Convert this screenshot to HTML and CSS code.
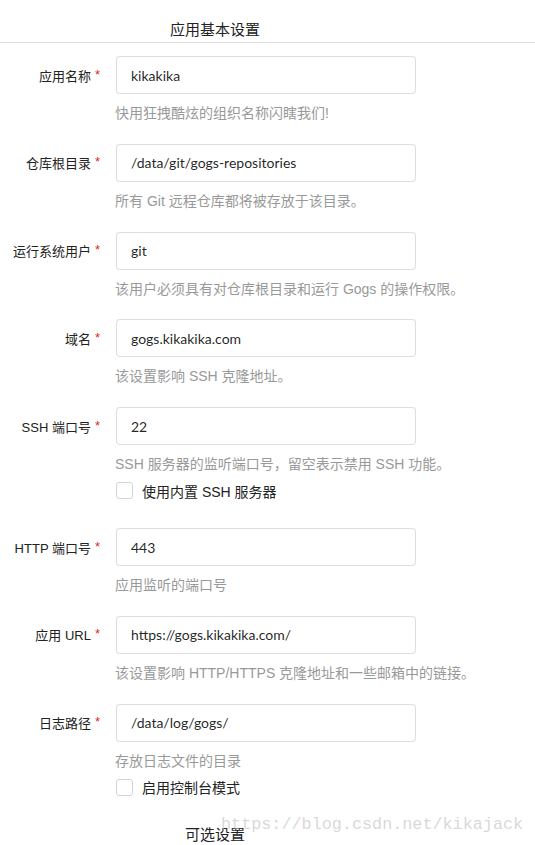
FILE: index.html
```html
<!DOCTYPE html>
<html>
<head>
<meta charset="utf-8">
<meta name="viewport" content="width=device-width, initial-scale=1">
<link rel="stylesheet" href="styles.css">
</head>
<body>

<form class="install">
  <h4 class="dividing">应用基本设置</h4>

  <div class="field">
    <div class="row">
      <label class="required">应用名称</label>
      <input type="text" value="kikakika">
    </div>
    <span class="help">快用狂拽酷炫的组织名称闪瞎我们!</span>
  </div>

  <div class="field">
    <div class="row">
      <label class="required">仓库根目录</label>
      <input type="text" value="/data/git/gogs-repositories">
    </div>
    <span class="help">所有 Git 远程仓库都将被存放于该目录。</span>
  </div>

  <div class="field">
    <div class="row">
      <label class="required">运行系统用户</label>
      <input type="text" value="git">
    </div>
    <span class="help">该用户必须具有对仓库根目录和运行 Gogs 的操作权限。</span>
  </div>

  <div class="field">
    <div class="row">
      <label class="required">域名</label>
      <input type="text" value="gogs.kikakika.com">
    </div>
    <span class="help">该设置影响 SSH 克隆地址。</span>
  </div>

  <div class="field">
    <div class="row">
      <label class="required">SSH 端口号</label>
      <input type="text" value="22">
    </div>
    <span class="help">SSH 服务器的监听端口号，留空表示禁用 SSH 功能。</span>
    <div class="checkbox"><span class="box"></span>使用内置 SSH 服务器</div>
  </div>

  <div class="field">
    <div class="row">
      <label class="required">HTTP 端口号</label>
      <input type="text" value="443">
    </div>
    <span class="help">应用监听的端口号</span>
  </div>

  <div class="field">
    <div class="row">
      <label class="required">应用 URL</label>
      <input type="text" value="https://gogs.kikakika.com/">
    </div>
    <span class="help">该设置影响 HTTP/HTTPS 克隆地址和一些邮箱中的链接。</span>
  </div>

  <div class="field">
    <div class="row">
      <label class="required">日志路径</label>
      <input type="text" value="/data/log/gogs/">
    </div>
    <span class="help">存放日志文件的目录</span>
    <div class="checkbox"><span class="box"></span>启用控制台模式</div>
  </div>

  <h4 class="dividing">可选设置</h4>
</form>

<div class="watermark">https://blog.csdn.net/kikajack</div>

</body>
</html>
```

FILE: styles.css
```css
body {
  margin: 0;
  background: #fff;
  color: rgba(0, 0, 0, 0.87);
  font-family: "Liberation Sans", "Noto Sans CJK SC", sans-serif;
  overflow: hidden;
}

* {
  box-sizing: border-box;
}

/* Form wrapper */
.install {
  margin: 0;
  padding-top: 20px;
}

/* Section headers, centred over the form column */
.dividing {
  margin: 0;
  padding: 0 105px 2px 0;
  border-bottom: 1px solid #ddd;
  text-align: center;
  font-size: 15px;
  font-weight: normal;
  line-height: 20px;
  color: #222;
}

.dividing + .field {
  margin-top: 13px;
}

/* One labelled input */
.field {
  margin-bottom: 20.75px;
}

.row {
  display: flex;
  align-items: center;
}

.row label {
  width: 100px;
  text-align: right;
  font-size: 13px;
  color: #222;
}

.required:after {
  content: "*";
  margin-left: 4px;
  color: #db2828;
  vertical-align: 0.15em;
}

.row input {
  margin: 0 0 0 16px;
  width: 300px;
  height: 38px;
  padding: 9px 14px;
  border: 1px solid rgba(34, 36, 38, 0.15);
  border-radius: 4px;
  font-family: Lato, "Liberation Sans", sans-serif;
  font-size: 14px;
  color: rgba(0, 0, 0, 0.87);
  outline: none;
}

/* Grey hint under the input */
.help {
  display: block;
  margin: 9px 0 0 115px;
  font-size: 14px;
  line-height: 20px;
  color: #999;
}

/* Checkbox line */
.checkbox {
  display: flex;
  align-items: center;
  margin: 8px 0 29px 116px;
  height: 17px;
  font-size: 14px;
  color: #222;
}

.field:has(.checkbox) {
  margin-bottom: 0;
}

.box {
  width: 17px;
  height: 17px;
  margin-right: 9px;
  border: 1px solid #d4d4d5;
  border-radius: 3px;
  background: #fff;
}

/* Blog watermark over the bottom right corner */
.watermark {
  position: absolute;
  left: 221px;
  top: 814px;
  font-family: "Liberation Mono", monospace;
  font-size: 16.8px;
  line-height: 22px;
  color: rgba(190, 190, 190, 0.6);
  pointer-events: none;
}
```
